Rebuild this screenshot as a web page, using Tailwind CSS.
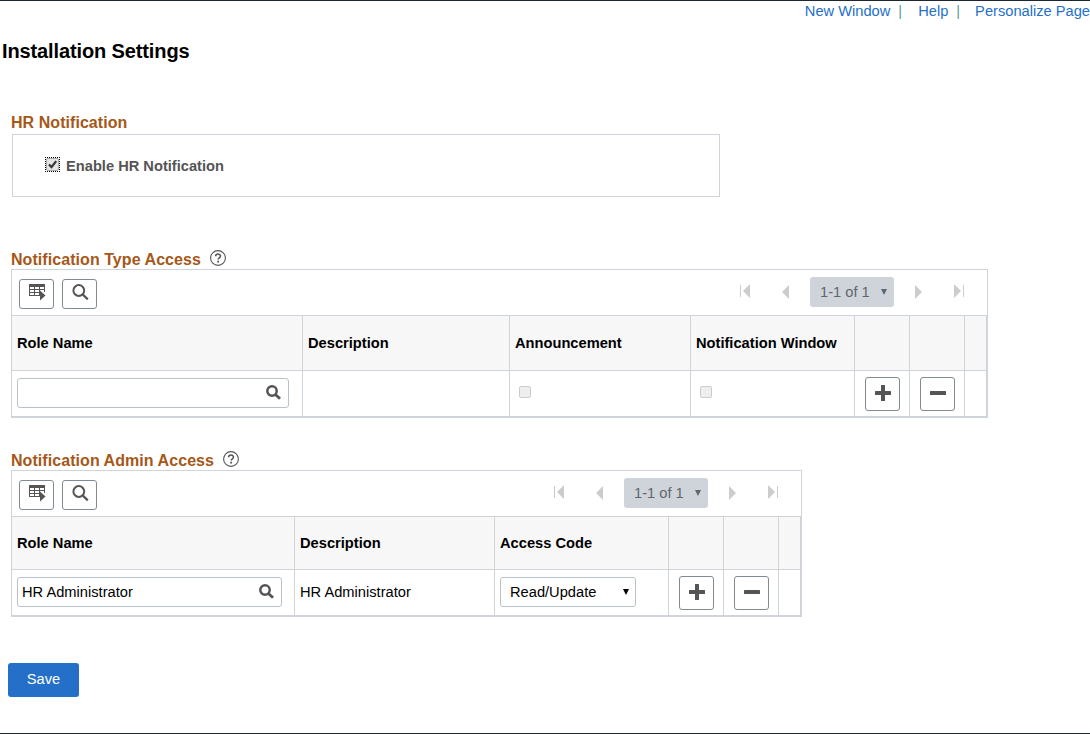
<!DOCTYPE html>
<html lang="en">
<head>
  <meta charset="UTF-8">
  <meta name="viewport" content="width=device-width, initial-scale=1.0">
  <title>Installation Settings</title>
  <script src="https://cdn.jsdelivr.net/npm/@tailwindcss/browser@4"></script>
</head>
<body class="bg-white font-['Liberation_Sans',Arial,sans-serif] text-[14.667px] text-black overflow-hidden">
  <!-- icons shared by both grids -->
  <svg class="hidden">
    <symbol id="grid-menu" viewBox="0 0 17 17">
      <path fill="#555" d="M0 0h16v3h-16z"/>
      <path fill="none" stroke="#555" d="M.5 3v8.500M0 5.500h16M0 8.500h11M0 11.500h10M5.500 3v9M10.500 3v9M15.500 3v5"/>
      <path fill="#555" d="M11 6.500l5.500 5-5.500 5z"/>
    </symbol>
    <symbol id="find" viewBox="0 0 17 17">
      <circle cx="6.800" cy="6.500" r="5.400" fill="none" stroke="#555" stroke-width="2"/>
      <path stroke="#555" stroke-width="2.200" d="M10.600 10.400l5.200 5"/>
    </symbol>
    <symbol id="lookup" viewBox="0 0 15 15">
      <circle cx="6" cy="6" r="4.700" fill="none" stroke="#555" stroke-width="2.500"/>
      <path stroke="#555" stroke-width="2.800" d="M9.200 9.200l4.800 4.600"/>
    </symbol>
    <symbol id="help" viewBox="0 0 16 16">
      <circle cx="8" cy="8" r="7.400" fill="none" stroke="#555" stroke-width="1.100"/>
      <path fill="none" stroke="#555" stroke-width="1.500" d="M5.600 6.300c0-3 4.900-2.900 4.900-.2 0 1.700-2.400 1.700-2.400 3.500"/>
      <path fill="#555" d="M7.200 10.700h1.800v1.800h-1.800z"/>
    </symbol>
    <symbol id="plus" viewBox="0 0 16 16">
      <path fill="#555" d="M6.500 0h3q.5 0 .5.500v5.500h5.500q.5 0 .5.500v3q0 .500-.5.500h-5.500v5.500q0 .500-.5.500h-3q-.5 0-.5-.5v-5.500h-5.500q-.5 0-.5-.5v-3q0-.5.500-.5h5.500v-5.500q0-.5.500-.5z"/>
    </symbol>
    <symbol id="minus" viewBox="0 0 16 16">
      <rect y="6" width="16" height="4" rx=".5" fill="#555"/>
    </symbol>
    <symbol id="first" viewBox="0 0 10 14">
      <path fill="#ccc" d="M0 1h1v12h-1zM10 0v14l-7-7z"/>
    </symbol>
    <symbol id="prev" viewBox="0 0 7 14">
      <path fill="#ccc" d="M7 0v14l-7-7z"/>
    </symbol>
    <symbol id="next" viewBox="0 0 7 14">
      <path fill="#ccc" d="M0 0v14l7-7z"/>
    </symbol>
    <symbol id="last" viewBox="0 0 10 14">
      <path fill="#ccc" d="M9 1h1v12h-1zM0 0v14l7-7z"/>
    </symbol>
    <symbol id="caret" viewBox="0 0 6 6">
      <path fill="currentColor" d="M0 0h6l-3 6z"/>
    </symbol>
  </svg>

  <div class="flex flex-col h-[734px] border-y border-[#1d2733]">
    <nav class="flex justify-end h-5 leading-5 text-[#2470c9] whitespace-nowrap">
      <a href="#">New Window</a>
      <span class="ml-2 mr-4 text-[#5b9a9a]">|</span>
      <a href="#">Help</a>
      <span class="ml-2 mr-[15px] text-[#5b9a9a]">|</span>
      <a href="#">Personalize Page</a>
    </nav>

    <h1 class="mt-[18px] ml-[2px] h-6 leading-6 text-[20px] tracking-[-0.12px] font-bold whitespace-nowrap">Installation Settings</h1>

    <section class="mt-[50px] ml-[11px]">
      <h2 class="h-[21px] leading-5 text-base tracking-[0.05px] font-bold text-[#a55818]">HR Notification</h2>
      <label class="flex items-center ml-px w-[708px] h-[63px] pl-8 border border-[#cfd3da] font-bold text-[#555]">
        <span class="-mt-[3px] mr-[6px] size-[15px] border border-dotted border-black">
          <svg class="size-[13px]" viewBox="0 0 13 13">
            <rect x=".5" y=".5" width="12" height="12" rx="1.500" fill="#e4e4e4" stroke="#aaa"/>
            <path fill="none" stroke="#333" stroke-width="2.200" d="M3 6.500l2.500 2.600 4.700-6"/>
          </svg>
        </span>
        Enable HR Notification
      </label>
    </section>

    <section class="mt-[53px] ml-[11px] w-[977px]">
      <h2 class="flex h-[19px] leading-5 text-base tracking-[0.06px] font-bold text-[#a55818]">
        Notification Type Access
        <svg class="ml-[9px] size-4"><use href="#help"/></svg>
      </h2>
      <div class="flex h-[46px] border-x border-t border-[#cfd3da] pl-[7px] pr-[23px]">
        <button class="flex justify-center mt-[9px] w-[35px] h-[30px] pt-[4px] pl-[2px] border border-[#828b94] rounded-[3px]"><svg class="size-[17px]"><use href="#grid-menu"/></svg></button>
        <button class="flex justify-center mt-[9px] ml-2 w-[35px] h-[30px] pt-[4px] pl-[2px] border border-[#828b94] rounded-[3px]"><svg class="size-[17px]"><use href="#find"/></svg></button>
        <div class="ml-auto flex items-center mt-[7px] h-[30px]">
          <svg class="-mt-0.5 w-[10px] h-[14px]"><use href="#first"/></svg>
          <svg class="ml-8 w-[7px] h-[14px]"><use href="#prev"/></svg>
          <div class="flex items-center justify-between ml-[21px] w-[84px] h-[30px] pl-[10px] pr-[7px] rounded-[3px] bg-[#cfd3da] text-[#5f666e]">1-1 of 1<svg class="size-[6px]"><use href="#caret"/></svg></div>
          <svg class="ml-[21px] w-[7px] h-[14px]"><use href="#next"/></svg>
          <svg class="ml-8 -mt-0.5 w-[10px] h-[14px]"><use href="#last"/></svg>
        </div>
      </div>
      <div class="border-l border-r-2 border-b-2 border-[#cfd3da]">
        <div class="grid grid-cols-[291px_207px_181px_164px_55px_55px_21px] h-14 border-y border-[#cfd3da] bg-[#f7f7f7] font-bold leading-[54px] whitespace-nowrap">
          <div class="pl-[5px] border-r border-[#cfd3da]">Role Name</div>
          <div class="pl-[5px] border-r border-[#cfd3da]">Description</div>
          <div class="pl-[5px] border-r border-[#cfd3da]">Announcement</div>
          <div class="pl-[5px] border-r border-[#cfd3da]">Notification Window</div>
          <div class="border-r border-[#cfd3da]"></div>
          <div class="border-r border-[#cfd3da]"></div>
          <div></div>
        </div>
        <div class="grid grid-cols-[291px_207px_181px_164px_55px_55px_21px] h-[45px]">
          <div class="pl-[5px] pt-[7px] border-r border-[#cfd3da]">
            <div class="flex items-center justify-end w-[272px] h-[30px] pr-[7px] border border-[#b9c1cc] rounded-[3px]"><svg class="-mt-px size-[15px]"><use href="#lookup"/></svg></div>
          </div>
          <div class="border-r border-[#cfd3da]"></div>
          <div class="pl-[9px] pt-[15px] border-r border-[#cfd3da]"><div class="size-3 border border-[#ccc] rounded-[2px] bg-[#eee]"></div></div>
          <div class="pl-[9px] pt-[15px] border-r border-[#cfd3da]"><div class="size-3 border border-[#ccc] rounded-[2px] bg-[#eee]"></div></div>
          <div class="pl-[10px] pt-[6px] border-r border-[#cfd3da]"><button class="flex justify-center w-[35px] h-[34px] pt-[7px] border border-[#828b94] rounded-[3px]"><svg class="size-4"><use href="#plus"/></svg></button></div>
          <div class="pl-[10px] pt-[6px] border-r border-[#cfd3da]"><button class="flex justify-center w-[35px] h-[34px] pt-[7px] border border-[#828b94] rounded-[3px]"><svg class="size-4"><use href="#minus"/></svg></button></div>
          <div></div>
        </div>
      </div>
    </section>

    <section class="mt-[33px] ml-[11px] w-[791px]">
      <h2 class="flex h-[19px] leading-5 text-base tracking-[0.06px] font-bold text-[#a55818]">
        Notification Admin Access
        <svg class="ml-[9px] size-4"><use href="#help"/></svg>
      </h2>
      <div class="flex h-[46px] border-x border-t border-[#cfd3da] pl-[7px] pr-[23px]">
        <button class="flex justify-center mt-[9px] w-[35px] h-[30px] pt-[4px] pl-[2px] border border-[#828b94] rounded-[3px]"><svg class="size-[17px]"><use href="#grid-menu"/></svg></button>
        <button class="flex justify-center mt-[9px] ml-2 w-[35px] h-[30px] pt-[4px] pl-[2px] border border-[#828b94] rounded-[3px]"><svg class="size-[17px]"><use href="#find"/></svg></button>
        <div class="ml-auto flex items-center mt-[7px] h-[30px]">
          <svg class="-mt-0.5 w-[10px] h-[14px]"><use href="#first"/></svg>
          <svg class="ml-8 w-[7px] h-[14px]"><use href="#prev"/></svg>
          <div class="flex items-center justify-between ml-[21px] w-[84px] h-[30px] pl-[10px] pr-[7px] rounded-[3px] bg-[#cfd3da] text-[#5f666e]">1-1 of 1<svg class="size-[6px]"><use href="#caret"/></svg></div>
          <svg class="ml-[21px] w-[7px] h-[14px]"><use href="#next"/></svg>
          <svg class="ml-8 -mt-0.5 w-[10px] h-[14px]"><use href="#last"/></svg>
        </div>
      </div>
      <div class="border-l border-r-2 border-b-2 border-[#cfd3da]">
        <div class="grid grid-cols-[283px_200px_174px_55px_55px_21px] h-[54px] border-y border-[#cfd3da] bg-[#f7f7f7] font-bold leading-[52px] whitespace-nowrap">
          <div class="pl-[5px] border-r border-[#cfd3da]">Role Name</div>
          <div class="pl-[5px] border-r border-[#cfd3da]">Description</div>
          <div class="pl-[5px] border-r border-[#cfd3da]">Access Code</div>
          <div class="border-r border-[#cfd3da]"></div>
          <div class="border-r border-[#cfd3da]"></div>
          <div></div>
        </div>
        <div class="grid grid-cols-[283px_200px_174px_55px_55px_21px] h-[45px]">
          <div class="pl-[5px] pt-[7px] border-r border-[#cfd3da]">
            <div class="flex items-center justify-between w-[265px] h-[30px] pl-[4px] pr-[7px] border border-[#b9c1cc] rounded-[3px]">HR Administrator<svg class="-mt-px size-[15px]"><use href="#lookup"/></svg></div>
          </div>
          <div class="pl-[5px] leading-[44px] border-r border-[#cfd3da]">HR Administrator</div>
          <div class="pl-[5px] pt-[7px] border-r border-[#cfd3da]">
            <div class="flex items-center justify-between w-[136px] h-[30px] pl-[9px] pr-[6px] border border-[#b9c1cc] rounded-[3px]">Read/Update<svg class="size-[6px]"><use href="#caret"/></svg></div>
          </div>
          <div class="pl-[10px] pt-[6px] border-r border-[#cfd3da]"><button class="flex justify-center w-[35px] h-[34px] pt-[7px] border border-[#828b94] rounded-[3px]"><svg class="size-4"><use href="#plus"/></svg></button></div>
          <div class="pl-[10px] pt-[6px] border-r border-[#cfd3da]"><button class="flex justify-center w-[35px] h-[34px] pt-[7px] border border-[#828b94] rounded-[3px]"><svg class="size-4"><use href="#minus"/></svg></button></div>
          <div></div>
        </div>
      </div>
    </section>

    <button class="mt-[46px] ml-2 w-[71px] h-[34px] pb-[2px] rounded-[3px] bg-[#2470c9] text-white">Save</button>
  </div>
</body>
</html>
